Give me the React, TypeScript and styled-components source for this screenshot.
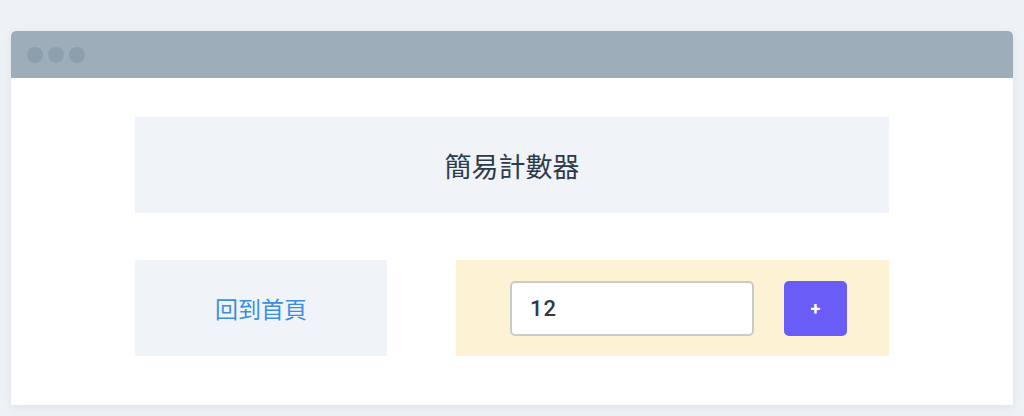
import * as React from 'react';
import styled, { createGlobalStyle } from 'styled-components';

const GlobalStyle = createGlobalStyle`
	html, body {
		margin: 0;
		padding: 0;
		background: #eef2f6;
		font-family: 'Noto Sans', 'Noto Sans CJK TC', sans-serif;
	}
`;

const Page = styled.div`
	width: 1024px;
	height: 416px;
	box-sizing: border-box;
	padding: 31px 11px 0 11px;
`;

const Window = styled.div`
	display: flex;
	flex-direction: column;
	background: #ffffff;
	border-radius: 5px 5px 0 0;
	box-shadow: 0 2px 8px rgba(120, 140, 160, 0.15);
	overflow: hidden;
`;

const TitleBar = styled.div`
	display: flex;
	align-items: center;
	gap: 5px;
	height: 47px;
	padding: 0 16px;
	background: #9eadba;
`;

const Dot = styled.span`
	width: 16px;
	height: 16px;
	border-radius: 50%;
	background: #8d9eac;
`;

const Content = styled.div`
	display: flex;
	flex-direction: column;
	gap: 47px;
	padding: 39px 124px 49px 124px;
`;

const Header = styled.div`
	display: flex;
	align-items: center;
	justify-content: center;
	height: 96px;
	background: #f0f4f8;
	color: #2d3a4a;
	font-family: 'Noto Sans CJK TC', sans-serif;
	font-size: 27px;
	font-weight: 400;
`;

const Row = styled.div`
	display: flex;
	gap: 69px;
	height: 96px;
`;

const HomeBox = styled.div`
	display: flex;
	align-items: center;
	justify-content: center;
	width: 252px;
	background: #f0f4f8;
`;

const HomeLink = styled.a`
	color: #3b8fe0;
	font-family: 'Noto Sans CJK TC', sans-serif;
	font-size: 23px;
	text-decoration: none;
	cursor: pointer;
`;

const CounterBox = styled.div`
	display: flex;
	align-items: center;
	gap: 30px;
	flex: 1;
	padding-left: 54px;
	background: #fdf2d4;
`;

const CountInput = styled.input`
	width: 244px;
	height: 55px;
	box-sizing: border-box;
	padding: 0 18px;
	border: 2px solid #c5ccca;
	border-radius: 5px;
	background: #ffffff;
	color: #2d3a4a;
	font-family: 'Roboto', sans-serif;
	font-size: 22px;
	font-weight: 500;
	letter-spacing: 1px;
	outline: none;
`;

const PlusButton = styled.button`
	width: 63px;
	height: 55px;
	border: none;
	border-radius: 5px;
	background: #6a5cf6;
	color: #ffffff;
	font-family: 'Roboto', sans-serif;
	font-size: 18px;
	font-weight: 700;
	cursor: pointer;
`;

export default function App() {
	const [count, setCount] = React.useState(12);

	return (
		<Page>
			<GlobalStyle />
			<Window>
				<TitleBar>
					<Dot />
					<Dot />
					<Dot />
				</TitleBar>
				<Content>
					<Header>簡易計數器</Header>
					<Row>
						<HomeBox>
							<HomeLink href="#">回到首頁</HomeLink>
						</HomeBox>
						<CounterBox>
							<CountInput
								value={count}
								onChange={e => setCount(Number(e.target.value) || 0)}
							/>
							<PlusButton onClick={() => setCount(count + 1)}>+</PlusButton>
						</CounterBox>
					</Row>
				</Content>
			</Window>
		</Page>
	);
}
